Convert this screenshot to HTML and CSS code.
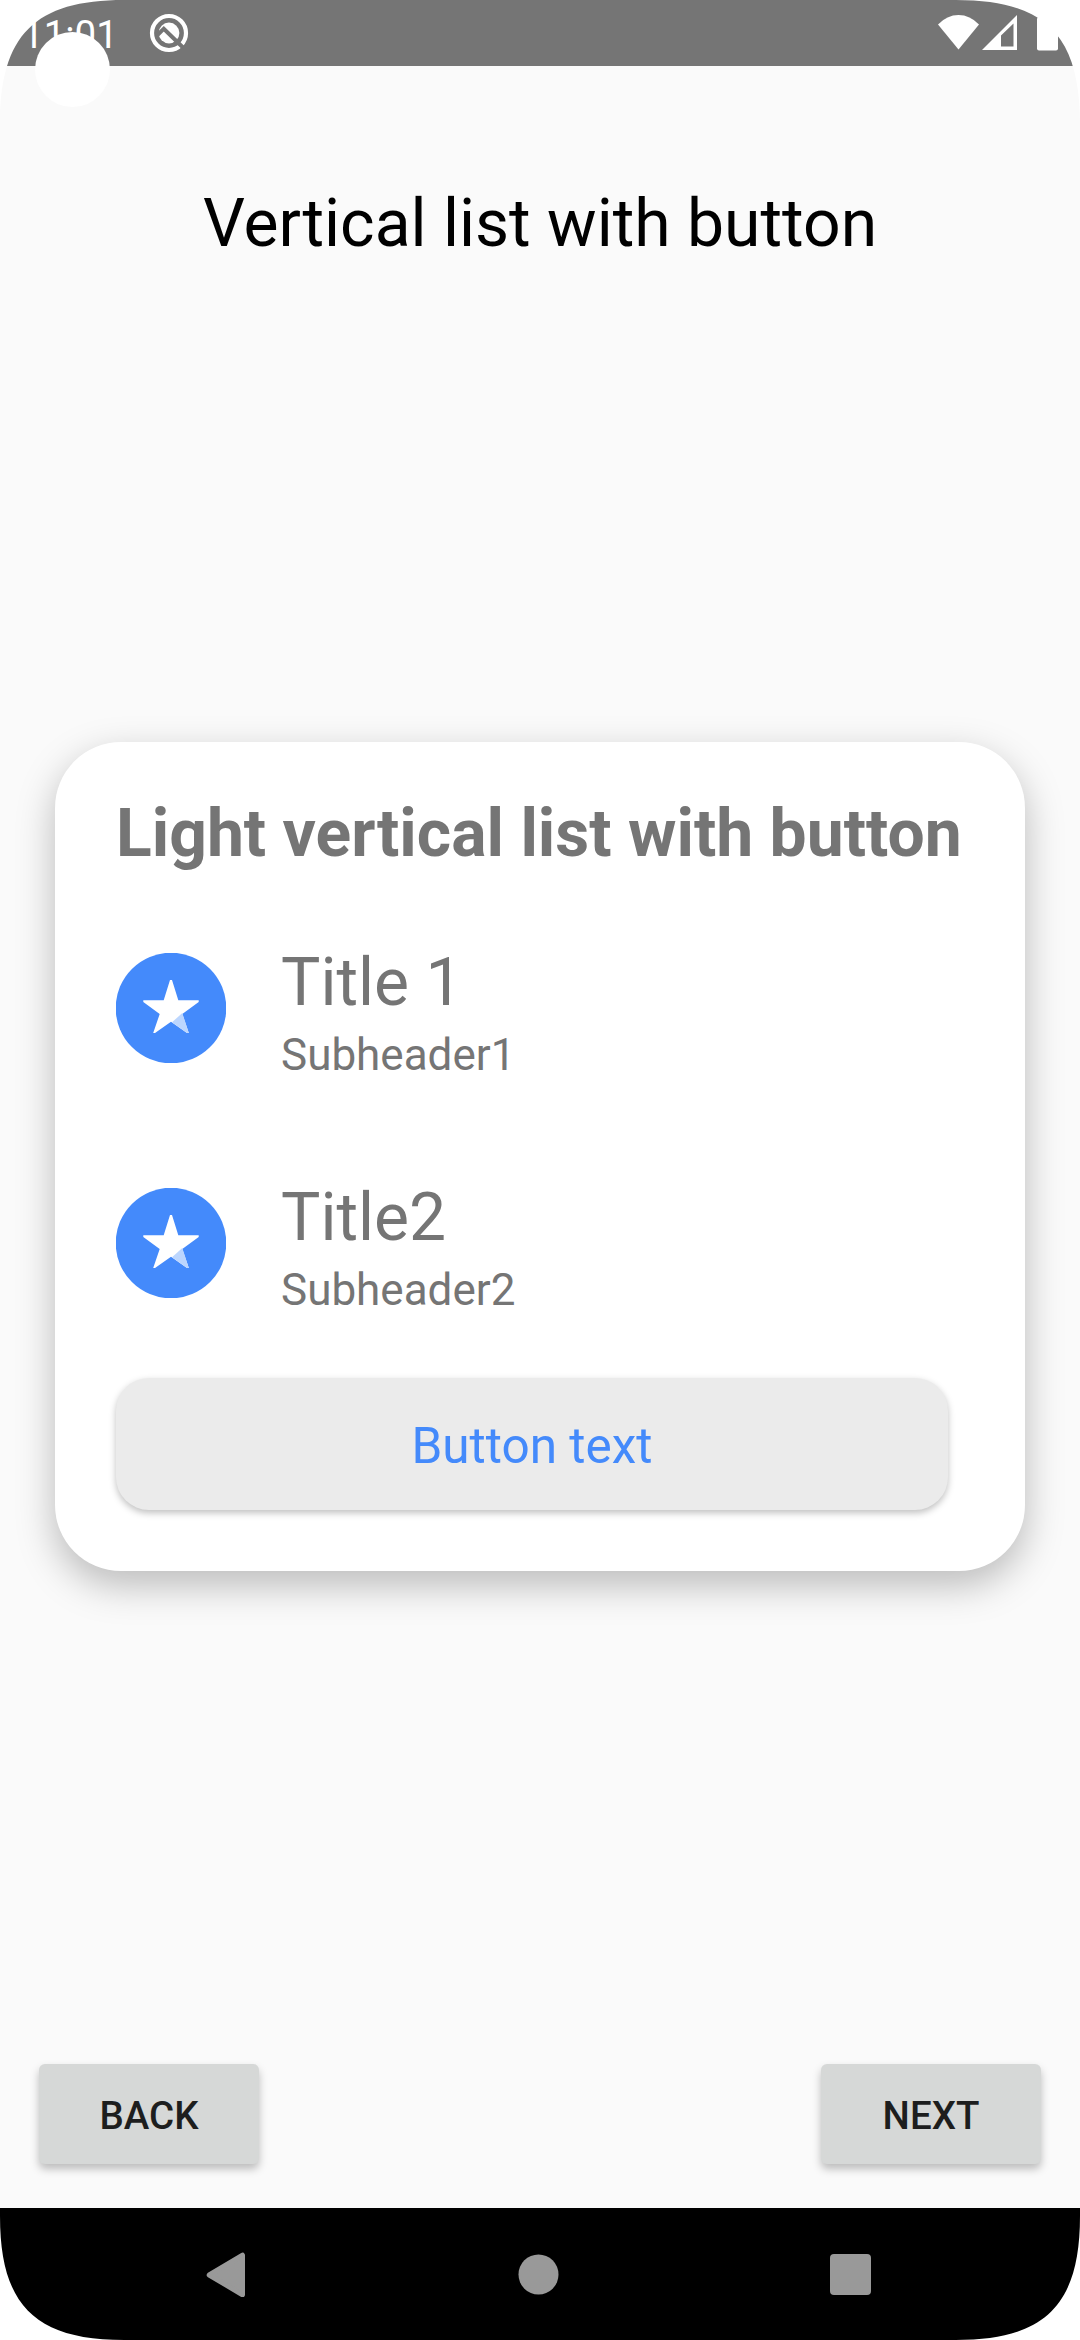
FILE: index.html
```html
<!DOCTYPE html>
<html lang="en">
<head>
<meta charset="utf-8">
<title>Vertical list with button</title>
<link rel="stylesheet" href="styles.css">
</head>
<body>
<div class="screen">
  <header class="status-bar">
    <span class="clock">11:01</span>
    <svg class="status-app" width="40" height="40" viewBox="0 0 40 40">
      <circle cx="20" cy="20" r="17" fill="none" stroke="#fff" stroke-width="4.2"/>
      <circle cx="20" cy="20" r="10.4" fill="#fff"/>
      <path d="M7.500 23L14.800 15.700L34 34.500" fill="none" stroke="#757575" stroke-width="4"/>
    </svg>
    <svg class="status-system" width="122" height="40" viewBox="0 0 122 40">
      <path d="M0 11.500Q9 2 20.500 2T41 11.500L20.500 36.500Z" fill="#fff"/>
      <path fill-rule="evenodd" d="M44 37L79 2V37ZM63 22.500V33.500H75.500V10.500Z" fill="#fff"/>
      <rect x="99" y="4" width="21" height="33.500" rx="2" fill="#fff"/>
    </svg>
  </header>

  <main class="content">
    <h1 class="page-title">Vertical list with button</h1>
    <section class="card">
      <h2 class="card-title">Light vertical list with button</h2>
      <ul class="list">
        <li class="item">
          <svg class="item-icon" viewBox="0 0 110 110">
            <circle cx="55" cy="55" r="55.300" fill="#448afb"/>
            <path d="M54 27H56L62.300 47.300H82.700V49L66.300 61L72.800 80H71L55 68.700L39 80H37.200L43.700 61L27.300 49V47.300H47.700Z" fill="#fff"/>
            <path d="M66.300 60L72.800 80H71L56 69.300Z" fill="#bcd6fe"/>
          </svg>
          <div class="item-text">
            <span class="item-title">Title 1</span>
            <span class="item-sub">Subheader1</span>
          </div>
        </li>
        <li class="item">
          <svg class="item-icon" viewBox="0 0 110 110">
            <circle cx="55" cy="55" r="55.300" fill="#448afb"/>
            <path d="M54 27H56L62.300 47.300H82.700V49L66.300 61L72.800 80H71L55 68.700L39 80H37.200L43.700 61L27.300 49V47.300H47.700Z" fill="#fff"/>
            <path d="M66.300 60L72.800 80H71L56 69.300Z" fill="#bcd6fe"/>
          </svg>
          <div class="item-text">
            <span class="item-title">Title2</span>
            <span class="item-sub">Subheader2</span>
          </div>
        </li>
      </ul>
      <button class="card-button" type="button">Button text</button>
    </section>
    <div class="pager">
      <button class="pager-button" type="button">BACK</button>
      <button class="pager-button" type="button">NEXT</button>
    </div>
  </main>

  <nav class="nav-bar">
    <svg width="45" height="45" viewBox="0 0 45 45"><path d="M4.200 23L37.500 3.200V42.800Z" fill="#999" stroke="#999" stroke-width="5" stroke-linejoin="round"/></svg>
    <svg width="45" height="45" viewBox="0 0 45 45"><circle cx="21.500" cy="22.500" r="20" fill="#999"/></svg>
    <svg width="45" height="45" viewBox="0 0 45 45"><rect x="2" y="2" width="41" height="41" rx="4" fill="#999"/></svg>
  </nav>

  <!-- Display cutout: rounded corners and camera hole -->
  <svg class="cutout" width="1080" height="2340" viewBox="0 0 1080 2340" fill="#fff">
    <path d="M0 0V124C0 35 35 0 124 0Z"/>
    <path d="M1080 0V124C1080 35 1045 0 956 0Z"/>
    <path d="M0 2340V2216C0 2305 35 2340 124 2340Z"/>
    <path d="M1080 2340V2216C1080 2305 1045 2340 956 2340Z"/>
    <circle cx="72.500" cy="69.500" r="37.500"/>
  </svg>
</div>
</body>
</html>
```
FILE: styles.css
```css
* {
  box-sizing: border-box;
}

body {
  margin: 0;
  background: #fafafa;
  font-family: Roboto, sans-serif;
}

.screen {
  position: relative;
  display: flex;
  flex-direction: column;
  width: 1080px;
  height: 2340px;
  overflow: hidden;
}

.status-bar {
  display: flex;
  align-items: flex-start;
  height: 66px;
  padding: 12px 20px 0 22px;
  background: #757575;
  color: #fff;
}

.clock {
  width: 98px;
  font-size: 38.500px;
  line-height: 46px;
}

.status-app {
  margin: 1px 0 0 28.500px;
}

.status-system {
  margin: 1px 0 0 auto;
}

.content {
  flex: 1;
  display: flex;
  flex-direction: column;
  align-items: center;
  padding: 119px 39px 44px;
}

.page-title {
  margin: 0;
  font-size: 66px;
  font-weight: 400;
  line-height: 78px;
  color: #000;
}

.card {
  width: 970px;
  height: 829px;
  margin-top: 479px;
  padding: 53px 61px 0;
  border-radius: 66px;
  background: #fff;
  box-shadow: 0 14px 38px rgba(0, 0, 0, 0.26);
  color: #757575;
}

.card-title {
  margin: 0;
  font-size: 66px;
  font-weight: 700;
  line-height: 78px;
  white-space: nowrap;
}

.list {
  display: flex;
  flex-direction: column;
  gap: 98px;
  margin: 71px 0 62px;
  padding: 0;
  list-style: none;
}

.item {
  display: flex;
  gap: 55px;
  height: 137px;
}

.item-icon {
  width: 110px;
  height: 110px;
  margin-top: 9px;
}

.item-text {
  display: flex;
  flex-direction: column;
  gap: 7px;
}

.item-title {
  font-size: 66px;
  line-height: 78px;
}

.item-sub {
  font-size: 44px;
  line-height: 52px;
}

.card-button {
  display: block;
  width: 832px;
  height: 132px;
  padding: 4px 0 0;
  border: 0;
  border-radius: 33px;
  background: #ebebeb;
  box-shadow: 0 3px 7px rgba(0, 0, 0, 0.25);
  font: 400 49.500px Roboto, sans-serif;
  color: #448afb;
}

.pager {
  display: flex;
  justify-content: space-between;
  align-self: stretch;
  margin-top: auto;
}

.pager-button {
  width: 220px;
  height: 100px;
  padding: 3px 0 0;
  border: 0;
  border-radius: 6px;
  background: #d6d8d7;
  box-shadow: 0 5px 8px rgba(0, 0, 0, 0.25);
  font: 500 38.500px Roboto, sans-serif;
  color: #1d1e1e;
}

.nav-bar {
  display: flex;
  justify-content: space-between;
  align-items: center;
  height: 132px;
  padding: 0 207px 0 205px;
  background: #000;
}

.cutout {
  position: absolute;
  inset: 0;
  pointer-events: none;
}
```
